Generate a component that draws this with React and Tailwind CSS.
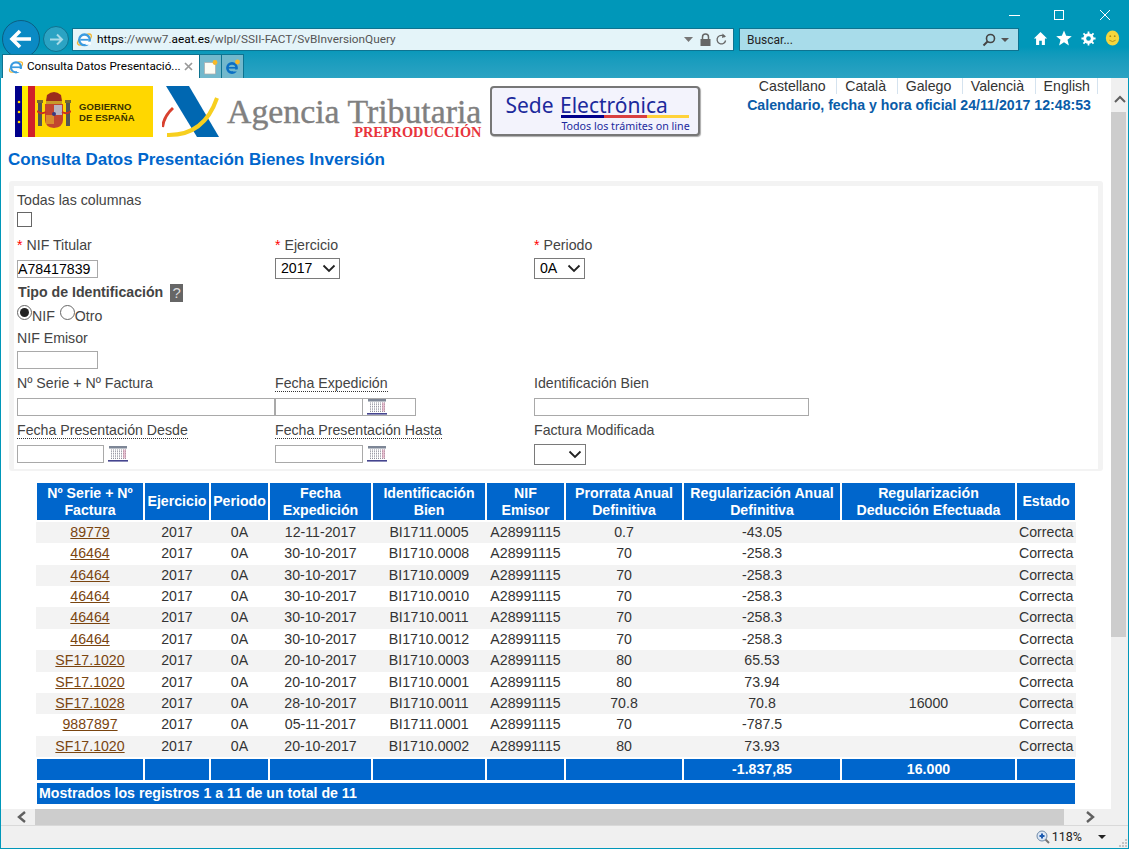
const SANS = "font-['Liberation_Sans',Arial,sans-serif]";

const COLS = [108, 66, 59, 103, 114, 79, 118, 158, 175, 60];

const ROWS = [
  ["89779", "12-11-2017", "BI1711.0005", "0.7", "-43.05", ""],
  ["46464", "30-10-2017", "BI1710.0008", "70", "-258.3", ""],
  ["46464", "30-10-2017", "BI1710.0009", "70", "-258.3", ""],
  ["46464", "30-10-2017", "BI1710.0010", "70", "-258.3", ""],
  ["46464", "30-10-2017", "BI1710.0011", "70", "-258.3", ""],
  ["46464", "30-10-2017", "BI1710.0012", "70", "-258.3", ""],
  ["SF17.1020", "20-10-2017", "BI1710.0003", "80", "65.53", ""],
  ["SF17.1020", "20-10-2017", "BI1710.0001", "80", "73.94", ""],
  ["SF17.1028", "28-10-2017", "BI1710.0011", "70.8", "70.8", "16000"],
  ["9887897", "05-11-2017", "BI1711.0001", "70", "-787.5", ""],
  ["SF17.1020", "20-10-2017", "BI1710.0002", "80", "73.93", ""],
];

const HEADERS = [
  ["Nº Serie + Nº", "Factura"],
  ["Ejercicio"],
  ["Periodo"],
  ["Fecha", "Expedición"],
  ["Identificación", "Bien"],
  ["NIF", "Emisor"],
  ["Prorrata Anual", "Definitiva"],
  ["Regularización Anual", "Definitiva"],
  ["Regularización", "Deducción Efectuada"],
  ["Estado"],
];

function IeLogo({ size = 16 }) {
  return (
    <svg width={size} height={size} viewBox="0 0 16 16" className="shrink-0">
      <ellipse cx="8" cy="8" rx="7.6" ry="3.4" transform="rotate(-35 8 8)" fill="none" stroke="#f2b632" strokeWidth="1.3" />
      <circle cx="8" cy="8.3" r="5" fill="#fff" stroke="#3b9be0" strokeWidth="2.2" />
      <rect x="4" y="7.4" width="8" height="1.7" fill="#3b9be0" />
      <rect x="9" y="10" width="5" height="3" fill="#fff" />
    </svg>
  );
}

function Calendar() {
  return (
    <svg width="20" height="16" viewBox="0 0 20 16" className="shrink-0">
      <rect x="1" y="0" width="18" height="2.5" fill="#7d8696" />
      {[0, 1, 2, 3, 4, 5].map((r) => (
        <line key={r} x1="3" x2="18" y1={4 + r * 1.7} y2={4 + r * 1.7} stroke="#8f8f9c" strokeDasharray="1 1" />
      ))}
      <rect x="15" y="3.5" width="3" height="9" fill="#d58aa8" opacity="0.5" />
      <rect x="0" y="14" width="20" height="1.6" fill="#45458f" />
    </svg>
  );
}

function Label({ children, dotted }) {
  return (
    <span className={`text-[14.16px] leading-[16px] text-[#444] ${dotted ? "border-b border-dotted border-[#333]" : ""}`}>
      {children}
    </span>
  );
}

function Req() {
  return <span className="text-[#f00] mr-1">*</span>;
}

function TextBox({ className = "", value = "" }) {
  return (
    <div className={`h-[18px] border border-[#a9a9a9] bg-white text-[14.16px] leading-[16px] text-black ${className}`}>
      {value}
    </div>
  );
}

function SelectBox({ value, className = "" }) {
  return (
    <div className={`h-[21px] border border-[#7a7a7a] bg-white flex items-center justify-between pl-[5px] pr-[3px] text-[14.16px] text-black ${className}`}>
      <span>{value}</span>
      <svg width="14" height="9" viewBox="0 0 14 9">
        <path d="M1.5 1.5 L7 7 L12.5 1.5" fill="none" stroke="#222" strokeWidth="1.8" />
      </svg>
    </div>
  );
}

function Radio({ on }) {
  return (
    <span className="w-[15px] h-[15px] rounded-full border border-[#666] bg-white flex items-center justify-center shrink-0">
      {on && <span className="w-[9px] h-[9px] rounded-full bg-[#222]" />}
    </span>
  );
}

function TitleBar() {
  return (
    <div className="h-[78px] shrink-0 bg-gradient-to-b from-[#0097b9] from-60% to-[#2ba3c3] relative">
      <div className="absolute top-0 right-0 w-[130px] h-[26px] flex items-start">
        <svg width="130" height="26" viewBox="0 0 130 26">
          <line x1="10" x2="21" y1="15.5" y2="15.5" stroke="#fff" />
          <rect x="55.5" y="10.5" width="9" height="9" fill="none" stroke="#fff" />
          <path d="M101 10 L111 20 M111 10 L101 20" stroke="#fff" />
        </svg>
      </div>
      {/* navigation row */}
      <div className="absolute left-[2px] top-[20px] flex items-center">
        <div className="w-[38px] h-[38px] rounded-full bg-[#0a8ac4] border border-[#0c5f82] flex items-center justify-center">
          <svg width="24" height="20" viewBox="0 0 24 20">
            <path d="M11 2 L3 10 L11 18 M3 10 H22" fill="none" stroke="#fff" strokeWidth="3.6" />
          </svg>
        </div>
        <div className="w-[26px] h-[26px] rounded-full bg-[#2ba3c3] border border-[#0e7390] flex items-center justify-center ml-[3px]">
          <svg width="15" height="13" viewBox="0 0 15 13">
            <path d="M8 1.5 L13 6.5 L8 11.5 M13 6.5 H1" fill="none" stroke="#a7dbe8" strokeWidth="2" />
          </svg>
        </div>
      </div>
      {/* address bar */}
      <div className="absolute left-[72px] top-[28px] w-[662px] h-[23px] bg-[#e4f4f9] border border-[#0e7390] flex items-center pl-[3px] pr-[6px]">
        <IeLogo size={17} />
        <span className="ml-[4px] text-[11.8px] text-[#555] font-['Roboto',sans-serif] whitespace-nowrap">
          <span className="text-black">https</span>://www7.<span className="text-black">aeat.es</span>/wlpl/SSII-FACT/SvBInversionQuery
        </span>
        <div className="ml-auto flex items-center">
          <svg width="9" height="5" viewBox="0 0 9 5"><path d="M0 0 H9 L4.5 5 Z" fill="#777" /></svg>
          <svg className="ml-[7px]" width="11" height="13" viewBox="0 0 11 13">
            <path d="M2.5 6 V4 a3 3 0 0 1 6 0 V6" fill="none" stroke="#666" strokeWidth="1.5" />
            <rect x="0.5" y="6" width="10" height="7" fill="#666" />
          </svg>
          <svg className="ml-[5px]" width="11" height="13" viewBox="0 0 11 13">
            <path d="M8.8 4 A4.3 4.3 0 1 0 9.6 7.5" fill="none" stroke="#666" strokeWidth="1.3" />
            <path d="M6.5 0.5 L10 3.5 L6 5 Z" fill="#666" />
          </svg>
        </div>
      </div>
      {/* search */}
      <div className="absolute left-[739px] top-[28px] w-[280px] h-[23px] bg-[#a8dcea] border border-[#0e7390] flex items-center pl-[7px] pr-[9px]">
        <span className="font-['Roboto',sans-serif] text-[12px] text-[#222]">Buscar...</span>
        <div className="ml-auto flex items-center gap-[5px]">
          <svg width="14" height="14" viewBox="0 0 14 14">
            <circle cx="8.5" cy="5.5" r="4" fill="none" stroke="#444" strokeWidth="1.6" />
            <path d="M5.5 8.5 L1.5 12.5" stroke="#444" strokeWidth="2" />
          </svg>
          <svg width="8" height="4" viewBox="0 0 8 4"><path d="M0 0 H8 L4 4 Z" fill="#555" /></svg>
        </div>
      </div>
      {/* tools */}
      <div className="absolute left-[1033px] top-[30px] flex items-center">
        <svg width="15" height="15" viewBox="0 0 17 17">
          <path d="M8.5 1 L16 8.5 H13.5 V16 H10 V11 H7 V16 H3.5 V8.5 H1 Z" fill="#fff" />
        </svg>
        <svg className="ml-[8px]" width="16" height="16" viewBox="0 0 17 17">
          <path d="M8.5 0.5 L10.8 6.2 L16.8 6.6 L12.2 10.4 L13.7 16.4 L8.5 13.1 L3.3 16.4 L4.8 10.4 L0.2 6.6 L6.2 6.2 Z" fill="#fff" />
        </svg>
        <svg className="ml-[9px]" width="15" height="15" viewBox="0 0 17 17">
          <circle cx="8.5" cy="8.5" r="4.4" fill="none" stroke="#fff" strokeWidth="3" />
          <path d="M8.5 0.5 V16.5 M0.5 8.5 H16.5 M2.8 2.8 L14.2 14.2 M14.2 2.8 L2.8 14.2" stroke="#fff" strokeWidth="2" />
          <circle cx="8.5" cy="8.5" r="2.6" fill="#0097b9" />
        </svg>
        <svg className="ml-[9px]" width="15" height="16" viewBox="0 0 16 18">
          <ellipse cx="8" cy="9" rx="7.5" ry="8.5" fill="#f5d63d" />
          <circle cx="5.5" cy="7" r="1" fill="#b08a10" />
          <circle cx="10.5" cy="7" r="1" fill="#b08a10" />
          <path d="M4.5 11.5 Q8 14.5 11.5 11.5" fill="none" stroke="#b08a10" />
        </svg>
      </div>
      {/* tab row */}
      <div className="absolute left-[2px] bottom-0 flex items-end">
        <div className="w-[198px] h-[24px] bg-white border-t border-x border-[#0e7390] flex items-center pl-[5px] pr-[6px]">
          <IeLogo size={16} />
          <span className="ml-[3px] font-['Roboto',sans-serif] text-[11.7px] text-black whitespace-nowrap">Consulta Datos Presentació...</span>
          <svg className="ml-auto" width="9" height="9" viewBox="0 0 9 9">
            <path d="M1 1 L8 8 M8 1 L1 8" stroke="#999" strokeWidth="1.7" />
          </svg>
        </div>
        <div className="w-[22px] h-[24px] bg-[#72b8cc] border-t border-r border-[#0e7390] flex items-center justify-center">
          <svg width="16" height="16" viewBox="0 0 16 16">
            <path d="M1.5 3.5 H10 L12.5 6 V15 H1.5 Z" fill="#fcfcf4" stroke="#aaa" strokeWidth="0.7" />
            <circle cx="12" cy="3.5" r="2.4" fill="#f8b827" />
          </svg>
        </div>
        <div className="w-[22px] h-[24px] bg-[#72b8cc] border-t border-r border-[#0e7390] flex items-center justify-center">
          <svg width="16" height="16" viewBox="0 0 16 16">
            <circle cx="7" cy="9" r="4.6" fill="none" stroke="#0b6fc4" strokeWidth="2.6" />
            <rect x="3" y="8" width="8" height="1.6" fill="#0b6fc4" />
            <rect x="8" y="10.5" width="6" height="2" fill="#72b8cc" />
            <circle cx="12.5" cy="3" r="2.4" fill="#f8b827" />
          </svg>
        </div>
      </div>
    </div>
  );
}

function Gobierno() {
  return (
    <div className="w-[138px] h-[51px] bg-[#ffd700] flex items-center shrink-0">
      <svg width="20" height="51" viewBox="0 0 20 51" className="shrink-0">
        <rect x="0" y="0" width="7" height="51" fill="#00008b" />
        <rect x="7" y="0" width="6" height="51" fill="#ffee00" />
        <rect x="13" y="0" width="7" height="51" fill="#d0202a" />
        <circle cx="4" cy="16" r="1.3" fill="#ffd700" />
        <circle cx="4" cy="26" r="1.3" fill="#ffd700" />
        <circle cx="4" cy="36" r="1.3" fill="#ffd700" />
      </svg>
      <svg width="34" height="42" viewBox="0 0 34 42" className="ml-[2px] shrink-0">
        <rect x="1" y="12" width="4" height="23" fill="#555" />
        <rect x="29" y="12" width="4" height="23" fill="#555" />
        <rect x="0" y="9" width="6" height="3" fill="#7a6a30" />
        <rect x="28" y="9" width="6" height="3" fill="#7a6a30" />
        <path d="M10 4 Q17 -2 24 4 L25 10 H9 Z" fill="#9c2b1c" />
        <rect x="9" y="10" width="16" height="3" fill="#c79a2a" />
        <path d="M8 13 H26 V29 Q26 36 17 37 Q8 36 8 29 Z" fill="#c2452f" />
        <rect x="17" y="14" width="8" height="10" fill="#b8b4c0" />
        <rect x="9" y="24" width="8" height="9" fill="#d98a2e" />
        <circle cx="17" cy="23" r="2" fill="#3a3a80" />
        <path d="M0 20 Q4 24 9 21 M25 21 Q30 24 34 20" fill="none" stroke="#c8321f" strokeWidth="2" />
      </svg>
      <div className={`ml-[8px] text-[9.5px] leading-[11px] font-bold text-[#3a3200] tracking-[0.1px] ${SANS}`}>
        <div>GOBIERNO</div>
        <div>DE ESPAÑA</div>
      </div>
    </div>
  );
}

function AgenciaLogo() {
  return (
    <div className="flex items-start ml-[9px]">
      <svg width="66" height="52" viewBox="0 0 66 52" className="shrink-0">
        <path d="M4 0 H27 L57 51 H35 Z" fill="#0067b1" />
        <path d="M0.5 41 Q2 30 11 22" fill="none" stroke="#d8412f" strokeWidth="3" />
        <path d="M5 49 Q42 50 55 12" fill="none" stroke="#f7cf1f" strokeWidth="4" />
      </svg>
      <div className="flex flex-col items-end -ml-px">
        <span className="font-['Liberation_Serif',serif] text-[33.8px] leading-[28px] text-[#808080] whitespace-nowrap mt-[12px] [-webkit-text-stroke:0.4px_#808080]">
          Agencia Tributaria
        </span>
        <span className="font-['Liberation_Serif',serif] font-bold text-[14.3px] leading-[13px] text-[#e8343c]">
          PREPRODUCCIÓN
        </span>
      </div>
    </div>
  );
}

function SedeLogo() {
  return (
    <div className="ml-[9px] w-[210px] h-[50px] shrink-0 rounded-[4px] border-2 border-[#777] bg-[#f3f3fc] flex flex-col pl-[13px] pt-[5px] shadow-[1px_1px_1px_#aaa]">
      <div className="font-['Noto_Sans',sans-serif] text-[21px] leading-[24px] text-[#1c2a9c] whitespace-nowrap [word-spacing:1px]">
        Sede Electrónica
      </div>
      <div className="flex h-[3px] ml-[56px] w-[128px] -mt-[2px] shrink-0">
        <span className="flex-1 bg-[#00008b]" />
        <span className="flex-1 bg-[#d94040]" />
        <span className="flex-1 bg-[#ffd23a]" />
      </div>
      <div className="font-['Noto_Sans',sans-serif] text-[10.7px] leading-[13px] text-[#1c2a9c] ml-[56px] mt-[2px] whitespace-nowrap">
        Todos los trámites on line
      </div>
    </div>
  );
}

function Header() {
  return (
    <div className="flex h-[70px] pl-[14px] relative">
      <div className="flex items-start mt-[8px]">
        <Gobierno />
        <AgenciaLogo />
        <SedeLogo />
      </div>
      <div className="ml-auto mr-[13px] flex flex-col items-end text-[14.16px] whitespace-nowrap">
        <div className="flex text-[#333] leading-[16px]">
          {["Castellano", "Català", "Galego", "Valencià", "English"].map((l) => (
            <span key={l} className="pl-[8px] pr-[10.5px] border-r border-[#d5e3ef] last:pr-[7px]">{l}</span>
          ))}
        </div>
        <div className="font-bold text-[#0a5ca8] leading-[16px] mt-[3px] mr-[7px]">
          Calendario, fecha y hora oficial 24/11/2017 12:48:53
        </div>
      </div>
    </div>
  );
}

function Form() {
  return (
    <div className="mx-[8px] mt-[12px] bg-[#f3f3f3] rounded-[3px] pt-[5px] px-[5px] pb-[2px]">
      <div className="bg-white h-[283px] pl-[3px] pt-[1px] grid grid-cols-[258px_259px_1fr] content-start text-[14.16px]">
        <div className="col-span-3 h-[48px]">
          <div className="leading-[16px] mt-[5px]"><Label>Todas las columnas</Label></div>
          <div className="w-[15px] h-[15px] border border-[#666] bg-white mt-[4px]" />
        </div>
        <div className="h-[48px]">
          <Label><Req />NIF Titular</Label>
          <TextBox className="w-[81px] mt-[4px]" value="A78417839" />
        </div>
        <div className="h-[48px]">
          <Label><Req />Ejercicio</Label>
          <SelectBox className="w-[65px] mt-[2px]" value="2017" />
        </div>
        <div className="h-[48px]">
          <Label><Req />Periodo</Label>
          <SelectBox className="w-[51px] mt-[2px]" value="0A" />
        </div>
        <div className="col-span-3 h-[47px]">
          <div className="flex items-center h-[18px] pl-px mt-px">
            <span className="font-bold text-[14.16px] text-[#444]">Tipo de Identificación</span>
            <span className="ml-[7px] w-[13px] h-[18px] bg-[#666] text-[#ddd] text-[15px] flex items-center justify-center">?</span>
          </div>
          <div className="flex items-start mt-[3px] h-[20px] text-[#444]">
            <Radio on />
            <span className="mt-[3px] leading-[16px]">NIF</span>
            <span className="w-[5px]" />
            <Radio />
            <span className="mt-[3px] leading-[16px]">Otro</span>
          </div>
        </div>
        <div className="col-span-3 h-[45px]">
          <div className="leading-[16px]"><Label>NIF Emisor</Label></div>
          <TextBox className="w-[81px] mt-[5px]" />
        </div>
        <div className="h-[47px]">
          <div className="leading-[16px]"><Label>Nº Serie + Nº Factura</Label></div>
          <TextBox className="w-[258px] mt-[7px]" />
        </div>
        <div className="h-[47px]">
          <div className="leading-[16px]"><Label dotted>Fecha Expedición</Label></div>
          <div className="w-[141px] h-[18px] border border-[#a9a9a9] mt-[7px] flex items-center">
            <div className="w-[87px] h-full border-r border-[#a9a9a9] mr-[4px]" />
            <Calendar />
          </div>
        </div>
        <div className="h-[47px]">
          <div className="leading-[16px]"><Label>Identificación Bien</Label></div>
          <TextBox className="w-[275px] mt-[7px]" />
        </div>
        <div>
          <div className="leading-[16px]"><Label dotted>Fecha Presentación Desde</Label></div>
          <div className="flex items-center gap-[4px] mt-[7px]">
            <TextBox className="w-[87px]" />
            <Calendar />
          </div>
        </div>
        <div>
          <div className="leading-[16px]"><Label dotted>Fecha Presentación Hasta</Label></div>
          <div className="flex items-center gap-[4px] mt-[7px]">
            <TextBox className="w-[88px]" />
            <Calendar />
          </div>
        </div>
        <div>
          <div className="leading-[16px]"><Label>Factura Modificada</Label></div>
          <SelectBox className="w-[52px] mt-[6px]" value="" />
        </div>
      </div>
    </div>
  );
}

function ResultTable() {
  return (
    <div className="ml-[34px] mt-[12px] w-[1042px] text-[14.16px] text-[#333]">
      <table className="border-collapse table-fixed w-[1042px]">
        <colgroup>
          {COLS.map((w, i) => <col key={i} style={{ width: w }} />)}
        </colgroup>
        <thead>
          <tr className="h-[38px]">
            {HEADERS.map((h, i) => (
              <th key={i} className="bg-[#0066cc] border-x-2 border-b-2 border-white text-white font-bold text-[14.16px] leading-[17px] text-center p-0">
                {h.map((l) => <div key={l} className="whitespace-nowrap">{l}</div>)}
              </th>
            ))}
          </tr>
        </thead>
        <tbody>
          {ROWS.map((r, i) => (
            <tr key={i} className={`h-[21.4px] ${i % 2 === 0 ? "bg-[#f3f3f3]" : "bg-white"}`}>
              <td className="p-0 text-center"><span className="underline text-[#7a4510]">{r[0]}</span></td>
              <td className="p-0 text-center">2017</td>
              <td className="p-0 text-center">0A</td>
              <td className="p-0 text-center">{r[1]}</td>
              <td className="p-0 text-center">{r[2]}</td>
              <td className="p-0 text-center">A28991115</td>
              <td className="p-0 text-center">{r[3]}</td>
              <td className="p-0 text-center">{r[4]}</td>
              <td className="p-0 text-center">{r[5]}</td>
              <td className="p-0 pl-[3px] text-left whitespace-nowrap">Correcta</td>
            </tr>
          ))}
        </tbody>
        <tfoot>
          <tr className="h-[23px]">
            {COLS.map((_, i) => (
              <td key={i} className="bg-[#0066cc] border-x-2 border-y-2 border-white text-white font-bold text-center p-0">
                {i === 7 ? "-1.837,85" : i === 8 ? "16.000" : ""}
              </td>
            ))}
          </tr>
        </tfoot>
      </table>
      <div className="h-[21px] bg-[#0066cc] text-white font-bold leading-[21px] pl-[2px] ml-[2px] mt-px w-[1038px]">
        Mostrados los registros 1 a 11 de un total de 11
      </div>
    </div>
  );
}

export default function App() {
  return (
    <div className={`w-[1129px] h-[849px] flex flex-col overflow-hidden bg-[#0097b9] ${SANS}`}>
      <TitleBar />
      <div className="flex-1 mx-px mb-px bg-white flex flex-col min-h-0">
        <div className="flex-1 flex min-h-0">
          <div className="flex-1 min-w-0 overflow-hidden">
            <Header />
            <div className="h-[3px]" />
            <h1 className="text-[17px] leading-[18px] font-bold text-[#0066cc] pl-[7px]">
              Consulta Datos Presentación Bienes Inversión
            </h1>
            <Form />
            <ResultTable />
          </div>
          <div className="w-[17px] bg-[#f0f0f0] flex flex-col shrink-0">
            <svg width="17" height="34" viewBox="0 0 17 34">
              <path d="M4 24 L9 19 L14 24" fill="none" stroke="#606060" strokeWidth="2" />
            </svg>
            <div className="w-[15px] h-[525px] bg-[#cdcdcd]" />
          </div>
        </div>
        <div className="h-[16px] bg-[#f0f0f0] flex items-center shrink-0">
          <svg width="34" height="16" viewBox="0 0 34 16" className="shrink-0">
            <path d="M24 3 L18 8 L24 13" fill="none" stroke="#606060" strokeWidth="2.4" />
          </svg>
          <div className="w-[1029px] h-full bg-[#cdcdcd]" />
          <svg width="34" height="16" viewBox="0 0 34 16" className="shrink-0">
            <path d="M23 3 L29 8 L23 13" fill="none" stroke="#606060" strokeWidth="2.4" />
          </svg>
        </div>
        <div className="h-[23px] bg-[#f0f0f0] border-t border-[#d9d9d9] flex items-center justify-end pr-[22px] shrink-0 relative">
          <svg width="14" height="14" viewBox="0 0 14 14">
            <circle cx="6" cy="6" r="5" fill="#dce7f5" stroke="#6f8aa8" />
            <path d="M3.5 6 H8.5 M6 3.5 V8.5" stroke="#1c5bb0" strokeWidth="2" />
            <path d="M9.5 9.5 L13 13" stroke="#777" strokeWidth="2" />
          </svg>
          <span className="font-['Roboto',sans-serif] text-[12.5px] text-[#222] ml-[2px]">118%</span>
          <svg className="ml-[16px]" width="8" height="4" viewBox="0 0 8 4"><path d="M0 0 H8 L4 4 Z" fill="#222" /></svg>
          <svg className="absolute right-[1px] bottom-[1px]" width="8" height="8" viewBox="0 0 8 8">
            <path d="M6 0h2v2H6z M3 3h2v2H3z M6 3h2v2H6z M0 6h2v2H0z M3 6h2v2H3z M6 6h2v2H6z" fill="#c4c4c4" />
          </svg>
        </div>
      </div>
    </div>
  );
}
